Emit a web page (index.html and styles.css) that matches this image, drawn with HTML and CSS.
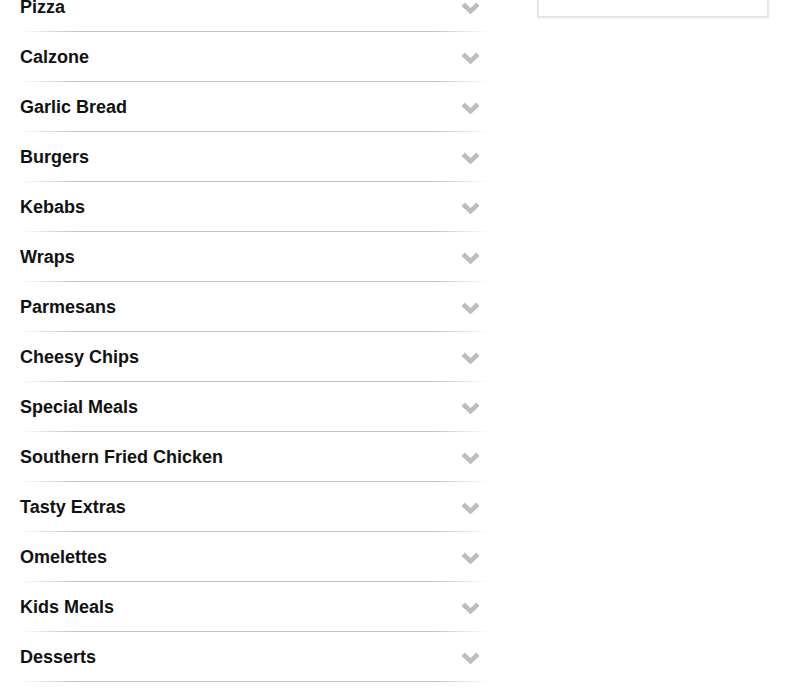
FILE: index.html
```html
<!DOCTYPE html>
<html>
<head>
<meta charset="utf-8">
<link rel="stylesheet" href="styles.css">
</head>
<body>
<div class="page">
  <ul class="menu">
    <li class="cat"><span class="name">Pizza</span><svg class="chev" viewBox="0 0 18 11"><path d="M2 2 L9 8.5 L16 2"/></svg></li>
    <li class="cat"><span class="name">Calzone</span><svg class="chev" viewBox="0 0 18 11"><path d="M2 2 L9 8.5 L16 2"/></svg></li>
    <li class="cat"><span class="name">Garlic Bread</span><svg class="chev" viewBox="0 0 18 11"><path d="M2 2 L9 8.5 L16 2"/></svg></li>
    <li class="cat"><span class="name">Burgers</span><svg class="chev" viewBox="0 0 18 11"><path d="M2 2 L9 8.5 L16 2"/></svg></li>
    <li class="cat"><span class="name">Kebabs</span><svg class="chev" viewBox="0 0 18 11"><path d="M2 2 L9 8.5 L16 2"/></svg></li>
    <li class="cat"><span class="name">Wraps</span><svg class="chev" viewBox="0 0 18 11"><path d="M2 2 L9 8.5 L16 2"/></svg></li>
    <li class="cat"><span class="name">Parmesans</span><svg class="chev" viewBox="0 0 18 11"><path d="M2 2 L9 8.5 L16 2"/></svg></li>
    <li class="cat"><span class="name">Cheesy Chips</span><svg class="chev" viewBox="0 0 18 11"><path d="M2 2 L9 8.5 L16 2"/></svg></li>
    <li class="cat"><span class="name">Special Meals</span><svg class="chev" viewBox="0 0 18 11"><path d="M2 2 L9 8.5 L16 2"/></svg></li>
    <li class="cat"><span class="name">Southern Fried Chicken</span><svg class="chev" viewBox="0 0 18 11"><path d="M2 2 L9 8.5 L16 2"/></svg></li>
    <li class="cat"><span class="name">Tasty Extras</span><svg class="chev" viewBox="0 0 18 11"><path d="M2 2 L9 8.5 L16 2"/></svg></li>
    <li class="cat"><span class="name">Omelettes</span><svg class="chev" viewBox="0 0 18 11"><path d="M2 2 L9 8.5 L16 2"/></svg></li>
    <li class="cat"><span class="name">Kids Meals</span><svg class="chev" viewBox="0 0 18 11"><path d="M2 2 L9 8.5 L16 2"/></svg></li>
    <li class="cat"><span class="name">Desserts</span><svg class="chev" viewBox="0 0 18 11"><path d="M2 2 L9 8.5 L16 2"/></svg></li>
  </ul>
  <aside class="side"><div class="basket"></div></aside>
</div>
</body>
</html>
```
FILE: styles.css
```css
html, body {
  margin: 0;
  padding: 0;
  background: #fff;
}
body {
  font-family: "Liberation Sans", Arial, sans-serif;
  overflow: hidden;
}
.page {
  display: flex;
  align-items: flex-start;
  margin-top: -18px;
  padding-left: 20px;
}
.menu {
  list-style: none;
  margin: 0;
  padding: 0;
  width: 468px;
  flex: none;
}
.cat {
  position: relative;
  height: 50px;
  display: flex;
  align-items: center;
  justify-content: space-between;
  padding-right: 8px;
}
.cat::after {
  content: "";
  position: absolute;
  left: 0;
  right: 0;
  bottom: 0;
  height: 1px;
  background: linear-gradient(to right, rgba(200,200,200,0) 0%, #c2c2c2 12%, #c2c2c2 88%, rgba(200,200,200,0) 100%);
  box-shadow: 0 -3px 4px rgba(0,0,0,0.015);
}
.name {
  font-size: 18px;
  font-weight: bold;
  color: #111;
}
.chev {
  width: 19px;
  height: 12px;
  margin-top: 2px;
}
.chev path {
  fill: none;
  stroke: #bdbdbd;
  stroke-width: 4.4;
  stroke-linecap: butt;
  stroke-linejoin: miter;
}
.side {
  margin-left: 49px;
  width: 232px;
  flex: none;
}
.basket {
  height: 36px;
  border: 2px solid #e6e6e6;
  box-sizing: border-box;
  box-shadow: 0 1px 2px rgba(0,0,0,0.04);
}
```
